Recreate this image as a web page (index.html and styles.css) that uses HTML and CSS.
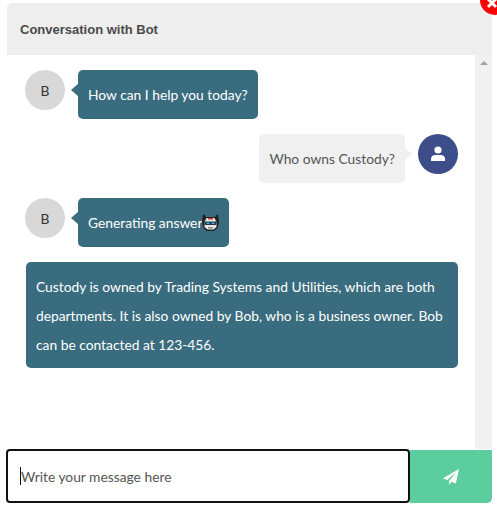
FILE: index.html
```html
<!DOCTYPE html>
<html lang="en">
<head>
    <meta charset="UTF-8">
    <meta name="viewport" content="width=device-width, initial-scale=1.0">
    <title>Conversation with Bot</title>
    <link rel="stylesheet" href="styles.css">
</head>
<body>
    <button class="close" aria-label="Close">
        <svg viewBox="0 0 12 12" width="12" height="12"><path d="M2 2L10 10M10 2L2 10" stroke="#fff" stroke-width="3"/></svg>
    </button>
    <div class="chat">
        <div class="header">
            <h1>Conversation with Bot</h1>
        </div>
        <div class="body">
            <div class="messages">
                <div class="row">
                    <div class="avatar bot">B</div>
                    <div class="bubble from-bot">How can I help you today?</div>
                </div>
                <div class="row mine">
                    <div class="bubble from-me">Who owns Custody?</div>
                    <div class="avatar me">
                        <svg viewBox="0 0 16 16" width="16" height="16"><circle cx="8" cy="4" r="3.6" fill="#fff"/><path d="M1 15v-2.2C1 10.4 3 9 5 9h6c2 0 4 1.400 4 3.800V15z" fill="#fff"/></svg>
                    </div>
                </div>
                <div class="row">
                    <div class="avatar bot">B</div>
                    <div class="bubble from-bot">Generating answer<svg class="robot" viewBox="0 0 17 17" width="17" height="17"><path d="M1 0L3 1.500L4 3H13L14 1.500L16 0L17 8L15.500 14L12 17H5L1.500 14L0 8z" fill="#222"/><path d="M4.500 4H12.500L14.500 8V13L11.500 15.500H5.500L2.500 13V8z" fill="#e8e8e8"/><rect x="6" y="4" width="5" height="1.500" fill="#d8412f"/><rect x="2.500" y="7.500" width="12" height="3.500" rx="1" fill="#26323a"/><rect x="4.500" y="8.500" width="3" height="1.500" fill="#2fb6ea"/><rect x="9.500" y="8.500" width="3" height="1.500" fill="#2fb6ea"/><rect x="6" y="13" width="5" height="1.500" fill="#8a8a8a"/></svg></div>
                </div>
                <div class="bubble answer">Custody is owned by Trading Systems and Utilities, which are both departments. It is also owned by Bob, who is a business owner. Bob can be contacted at 123-456.</div>
            </div>
            <div class="scrollbar"><span class="arrow"></span></div>
        </div>
        <form class="composer">
            <div class="field">
                <span class="caret"></span>
                <input type="text" placeholder="Write your message here">
            </div>
            <button class="send" type="button" aria-label="Send">
                <svg viewBox="0 0 16 16" width="16" height="16"><path d="M16 0L0 9.200L4.300 11L13.500 3L6 12V16L8.500 12.800L12.800 14.500z" fill="#fff"/></svg>
            </button>
        </form>
    </div>
</body>
</html>
```
FILE: styles.css
```css
* {
    box-sizing: border-box;
}

body {
    margin: 0;
    padding: 0;
    background-color: #fff;
    font-family: 'Lato', sans-serif;
    font-size: 13.800px;
    overflow: hidden;
}

.chat {
    width: 486px;
    margin: 3px 0 0 6px;
}

.header {
    height: 52px;
    margin-left: 1px;
    padding-left: 13px;
    display: flex;
    align-items: center;
    background-color: #eee;
    border-radius: 5px 0 0 0;
}

.header h1 {
    margin: 0;
    font-family: 'Liberation Sans', sans-serif;
    font-size: 13px;
    font-weight: 700;
    color: #4a4a4a;
}

.body {
    display: flex;
    height: 394px;
}

.messages {
    flex: 1;
    padding: 15px 17px 0 19px;
}

.scrollbar {
    width: 17px;
    background-color: #f1f1f1;
    display: flex;
    justify-content: center;
    padding-top: 6px;
}

.arrow {
    width: 0;
    height: 0;
    border-left: 4px solid transparent;
    border-right: 4px solid transparent;
    border-bottom: 4px solid #a3a3a3;
}

.row {
    display: flex;
    align-items: flex-start;
    gap: 13px;
    margin-bottom: 15px;
}

.mine {
    justify-content: flex-end;
}

.avatar {
    width: 40px;
    height: 40px;
    flex-shrink: 0;
    border-radius: 50%;
    display: flex;
    align-items: center;
    justify-content: center;
}

.bot {
    background-color: #d8d8d8;
    color: #333;
}

.me {
    background-color: #3d4d89;
}

.bubble {
    position: relative;
    height: 49px;
    padding: 0 10px;
    display: flex;
    align-items: center;
    border-radius: 5px;
    line-height: 49px;
    white-space: nowrap;
}

.from-bot {
    background-color: #396c7e;
    color: #fff;
}

.from-bot::before {
    content: '';
    position: absolute;
    left: -7px;
    top: 14px;
    border-top: 6px solid transparent;
    border-bottom: 6px solid transparent;
    border-right: 7px solid #396c7e;
}

.from-me {
    background-color: #f0f0f0;
    color: #555;
}

.from-me::after {
    content: '';
    position: absolute;
    right: -7px;
    top: 14px;
    border-top: 6px solid transparent;
    border-bottom: 6px solid transparent;
    border-left: 7px solid #f0f0f0;
}

.robot {
    flex-shrink: 0;
}

.answer {
    display: block;
    height: 106px;
    padding: 10px;
    margin: 15px 0 0 1px;
    background-color: #396c7e;
    color: #fff;
    line-height: 29px;
    white-space: normal;
}

.composer {
    display: flex;
    height: 54px;
}

.field {
    width: 404px;
    display: flex;
    align-items: center;
    padding-left: 12px;
    border: 2px solid #111;
    border-radius: 4px;
    background-color: #fff;
}

.caret {
    width: 1px;
    height: 18px;
    background-color: #111;
}

.field input {
    flex: 1;
    min-width: 0;
    border: 0;
    outline: 0;
    padding: 0;
    font: inherit;
}

.field input::placeholder {
    color: #555;
    opacity: 1;
}

.send {
    flex: 1;
    display: flex;
    align-items: center;
    justify-content: center;
    border: 0;
    padding: 0;
    margin-top: 1px;
    background-color: #5ccd9e;
    border-radius: 0 0 5px 0;
}

.close {
    position: absolute;
    top: -15px;
    left: 480px;
    width: 30px;
    height: 30px;
    padding: 0 6px 6px 0;
    border: 0;
    border-radius: 50%;
    background-color: #f00;
    display: flex;
    align-items: flex-end;
    justify-content: center;
    z-index: 2;
}
```
